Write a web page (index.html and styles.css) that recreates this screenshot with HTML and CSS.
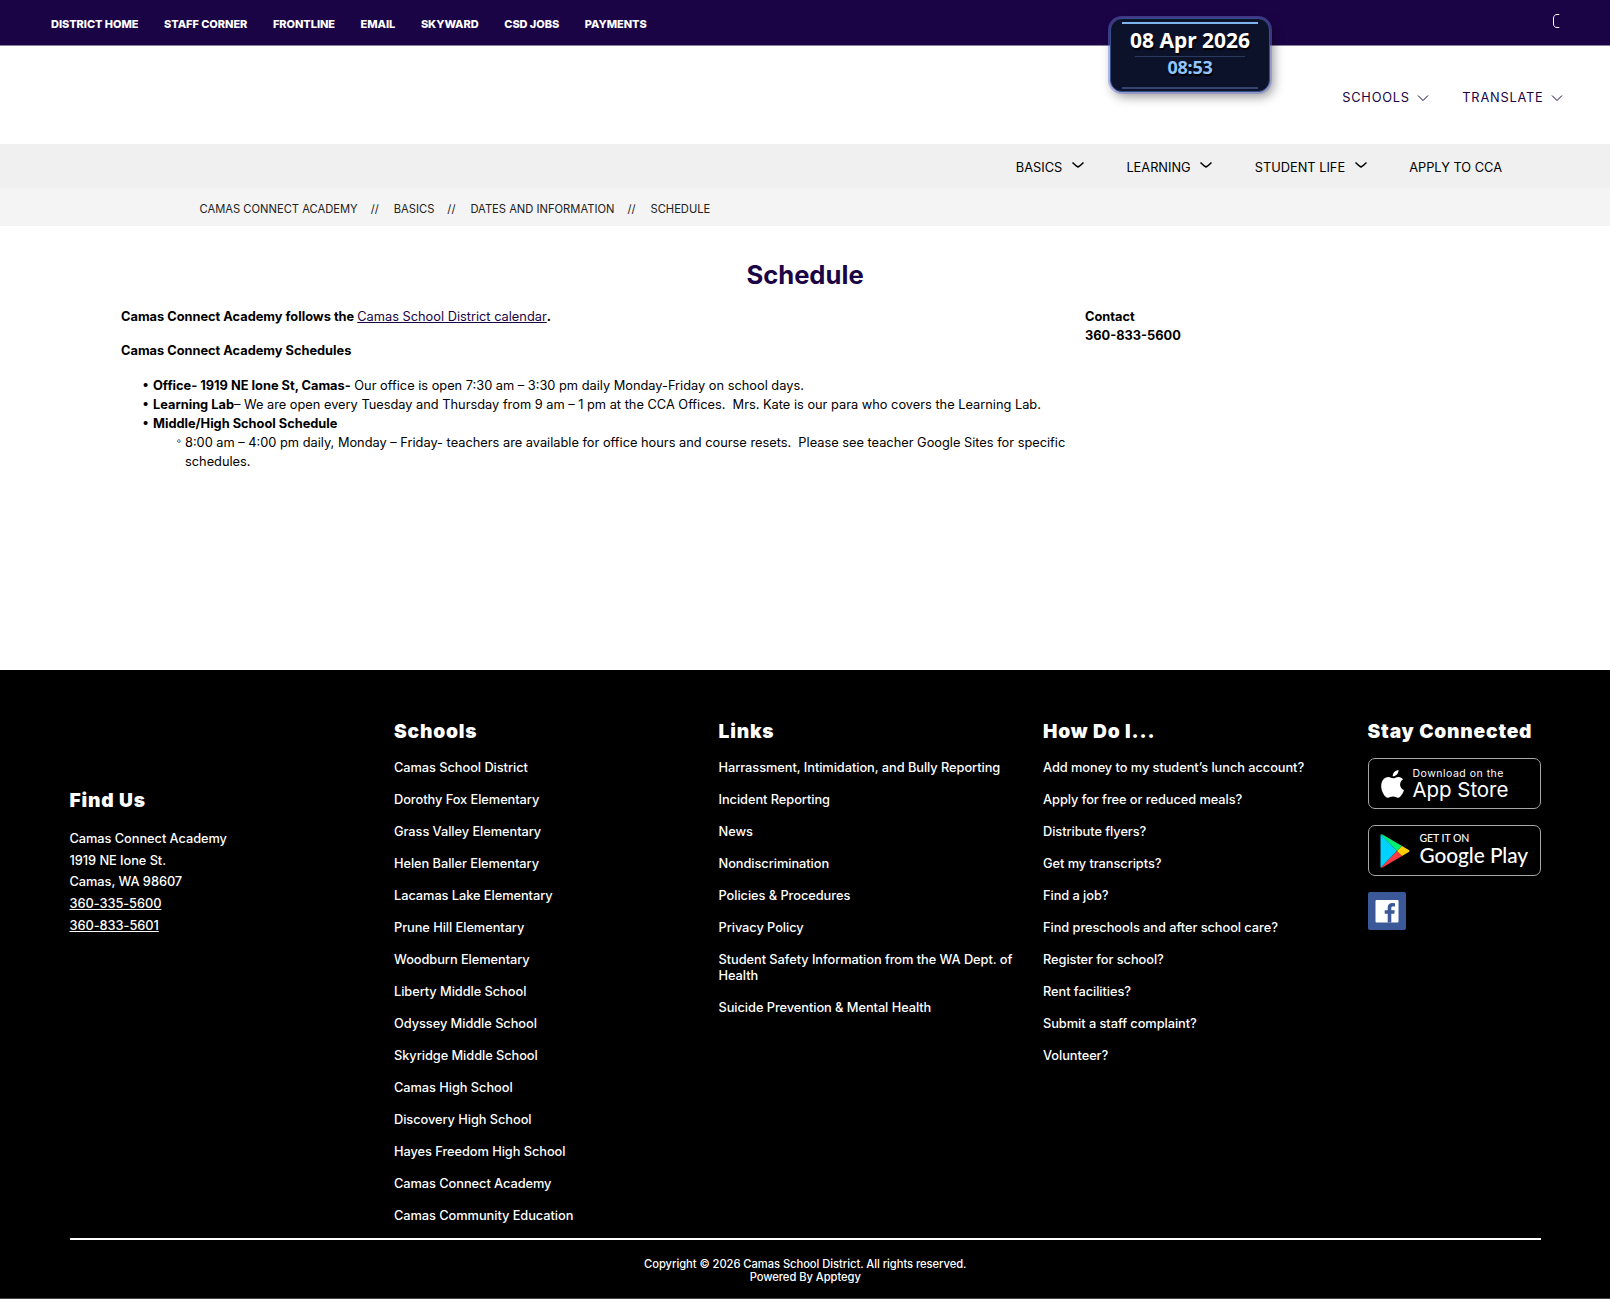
FILE: index.html
```html
<!DOCTYPE html>
<html lang="en">
<head>
    <meta charset="UTF-8">
    <meta name="viewport" content="width=device-width, initial-scale=1.0">
    <title>Schedule | Camas Connect Academy</title>
    <link rel="stylesheet" href="styles.css">
</head>
<body>
    <header>
        <div class="topbar">
            <nav class="quick-links">
                <a href="#">District Home</a>
                <a href="#">Staff Corner</a>
                <a href="#">Frontline</a>
                <a href="#">Email</a>
                <a href="#">Skyward</a>
                <a href="#">CSD Jobs</a>
                <a href="#">Payments</a>
            </nav>
            <svg class="search" width="8" height="16" viewBox="0 0 8 16" fill="none" stroke="#fff" stroke-width="1">
                <path d="M7 2V1.500H5C3 1.500 1.500 3 1.500 5v6c0 2 1.500 3.500 3.500 3.500h2V14"/>
            </svg>
            <div class="clock">
                <div class="clock-date">08 Apr 2026</div>
                <div class="clock-time">08:53</div>
            </div>
        </div>
        <div class="masthead">
            <a href="#">Schools <svg width="12" height="8" viewBox="0 0 12 8"><path d="M1 1.500l5 5 5-5"/></svg></a>
            <a href="#">Translate <svg width="12" height="8" viewBox="0 0 12 8"><path d="M1 1.500l5 5 5-5"/></svg></a>
        </div>
        <nav class="main-nav">
            <a href="#">Basics <svg width="14" height="8" viewBox="0 0 14 8"><path d="M1.500 1.500Q5 5 7 6 9 5 12.500 1.500"/></svg></a>
            <a href="#">Learning <svg width="14" height="8" viewBox="0 0 14 8"><path d="M1.500 1.500Q5 5 7 6 9 5 12.500 1.500"/></svg></a>
            <a href="#">Student Life <svg width="14" height="8" viewBox="0 0 14 8"><path d="M1.500 1.500Q5 5 7 6 9 5 12.500 1.500"/></svg></a>
            <a href="#">Apply to CCA</a>
        </nav>
        <div class="breadcrumbs">
            <a href="#">Camas Connect Academy</a><span>//</span>
            <a href="#">Basics</a><span>//</span>
            <a href="#">Dates and Information</a><span>//</span>
            <a href="#">Schedule</a>
        </div>
    </header>

    <main>
        <h1>Schedule</h1>
        <div class="columns">
            <div class="content">
                <p><b>Camas Connect Academy follows the </b><a href="#">Camas School District calendar</a><b>.</b></p>
                <p><b>Camas Connect Academy Schedules</b></p>
                <ul>
                    <li><b>Office- 1919 NE Ione St, Camas-</b> Our office is open 7:30 am – 3:30 pm daily Monday-Friday on school days.</li>
                    <li><b>Learning Lab</b>– We are open every Tuesday and Thursday from 9 am – 1 pm at the CCA Offices.&nbsp; Mrs. Kate is our para who covers the Learning Lab.</li>
                    <li><b>Middle/High School Schedule</b>
                        <ul>
                            <li>8:00 am – 4:00 pm daily, Monday – Friday- teachers are available for office hours and course resets.&nbsp; Please see teacher Google Sites for specific schedules.</li>
                        </ul>
                    </li>
                </ul>
            </div>
            <aside>
                <b>Contact</b><br>
                <b>360-833-5600</b>
            </aside>
        </div>
    </main>

    <footer>
        <div class="footer-grid">
            <div class="find-us">
                <h2>Find Us</h2>
                <address>
                    Camas Connect Academy<br>
                    1919 NE Ione St.<br>
                    Camas, WA 98607<br>
                    <a href="#">360-335-5600</a><br>
                    <a href="#">360-833-5601</a>
                </address>
            </div>
            <div>
                <h2>Schools</h2>
                <ul>
                    <li>Camas School District</li>
                    <li>Dorothy Fox Elementary</li>
                    <li>Grass Valley Elementary</li>
                    <li>Helen Baller Elementary</li>
                    <li>Lacamas Lake Elementary</li>
                    <li>Prune Hill Elementary</li>
                    <li>Woodburn Elementary</li>
                    <li>Liberty Middle School</li>
                    <li>Odyssey Middle School</li>
                    <li>Skyridge Middle School</li>
                    <li>Camas High School</li>
                    <li>Discovery High School</li>
                    <li>Hayes Freedom High School</li>
                    <li>Camas Connect Academy</li>
                    <li>Camas Community Education</li>
                </ul>
            </div>
            <div>
                <h2>Links</h2>
                <ul>
                    <li>Harrassment, Intimidation, and Bully Reporting</li>
                    <li>Incident Reporting</li>
                    <li>News</li>
                    <li>Nondiscrimination</li>
                    <li>Policies &amp; Procedures</li>
                    <li>Privacy Policy</li>
                    <li>Student Safety Information from the WA Dept. of Health</li>
                    <li>Suicide Prevention &amp; Mental Health</li>
                </ul>
            </div>
            <div>
                <h2>How Do I...</h2>
                <ul>
                    <li>Add money to my student’s lunch account?</li>
                    <li>Apply for free or reduced meals?</li>
                    <li>Distribute flyers?</li>
                    <li>Get my transcripts?</li>
                    <li>Find a job?</li>
                    <li>Find preschools and after school care?</li>
                    <li>Register for school?</li>
                    <li>Rent facilities?</li>
                    <li>Submit a staff complaint?</li>
                    <li>Volunteer?</li>
                </ul>
            </div>
            <div>
                <h2>Stay Connected</h2>
                <a class="badge apple" href="#">
                    <svg width="23" height="28" viewBox="0 0 23 28" fill="#fff">
                        <path d="M17.500 0c.2 3.500-2.700 6.400-5.800 6.300C11.400 3.200 14.400.3 17.500 0z"/>
                        <path d="M22 9.500c-4.300 2.600-3.700 8.700 1 10.500-1 3-3.300 7.300-5.700 7.700-2 .2-2.900-1.200-5.300-1.200s-3.400 1.200-5.200 1.200C3.700 27.600.2 21.500.2 16c0-5.500 3.300-9 7-9 2.200 0 3.600 1.300 5 1.300 1.500 0 3.200-1.500 5.600-1.400 1.700.1 3.200 1 4.200 2.600z"/>
                    </svg>
                    <span class="badge-text"><small>Download on the</small>App Store</span>
                </a>
                <a class="badge google" href="#">
                    <svg width="30" height="34" viewBox="0 0 30 34">
                        <path fill="#00d2ff" d="M.5 1.500Q.5.500 1 .5L17 17 1 33.500Q.500 33.500.500 32.500z"/>
                        <path fill="#00f076" d="M1 .5Q1.700.200 2.500.600L22 12 17 17z"/>
                        <path fill="#ff3a44" d="M1 33.500Q1.700 33.800 2.500 33.400L22 22 17 17z"/>
                        <path fill="#ffd000" d="M22 12l6.800 4q1.400 1 0 2L22 22l-5-5z"/>
                    </svg>
                    <span class="badge-text"><small>GET IT ON</small>Google Play</span>
                </a>
                <a class="facebook" href="#">
                    <svg width="38" height="38" viewBox="0 0 38 38">
                        <rect x="7.500" y="8" width="23" height="22.500" rx="1" fill="#fff"/>
                        <path fill="#3b5998" d="M19.700 30.500v-8.700h-3v-3.500h3v-2.600c0-3.100 1.900-4.600 4.500-4.600l2.800.1v3.200h-1.900c-1.500 0-1.800.7-1.800 1.700v2.200h3.500l-.5 3.500h-3v8.700z"/>
                    </svg>
                </a>
            </div>
        </div>
        <div class="copyright">
            Copyright © 2026 Camas School District. All rights reserved.<br>
            Powered By Apptegy
        </div>
    </footer>
</body>
</html>
```
FILE: styles.css
```css
* {
    box-sizing: border-box;
}
body {
    margin: 0;
    font-family: Inter, Arial, sans-serif;
    font-size: 12.8px;
    color: #000;
    background: #fff;
}
a {
    color: inherit;
    text-decoration: none;
}
ul {
    margin: 0;
    padding: 0;
    list-style: none;
}

/* header */
.topbar {
    position: relative;
    display: flex;
    align-items: center;
    justify-content: space-between;
    height: 46px;
    padding: 2px 50px 0 51px;
    background: #1a0446;
    border-bottom: 1px solid #8b80a2;
}
.quick-links {
    display: flex;
    gap: 25.6px;
    color: #fff;
    font-size: 11px;
    font-weight: 800;
    letter-spacing: -0.05px;
    text-transform: uppercase;
}
.search {
    margin-bottom: 5px;
}
.clock {
    position: absolute;
    top: 18px;
    left: 1110px;
    width: 160px;
    height: 74px;
    padding-top: 8px;
    border: 1px solid #33508a;
    border-radius: 12px;
    background: #0d122b;
    box-shadow: 0 0 0 2px rgba(110, 120, 220, 0.45), 3px 4px 12px rgba(0, 0, 0, 0.45);
    font-family: "Noto Sans", "Open Sans", sans-serif;
    font-weight: 700;
    text-align: center;
    text-shadow: 1px 2px 1px #000;
}
.clock::before,
.clock::after {
    content: "";
    position: absolute;
    left: 11px;
    right: 11px;
    height: 2px;
    background: #7db4ee;
}
.clock::before {
    top: 3px;
}
.clock::after {
    bottom: 2px;
    background: #35456e;
}
.clock-date {
    display: flex;
    justify-content: center;
    width: 110px;
    height: 30px;
    margin: 0 auto;
    border-bottom: 1px solid #2b3a5c;
    color: #fff;
    font-size: 21px;
    line-height: 27px;
    white-space: nowrap;
}
.clock-time {
    color: #90c5ff;
    font-size: 18px;
    letter-spacing: -0.2px;
    line-height: 21px;
}
.masthead {
    display: flex;
    justify-content: flex-end;
    align-items: center;
    gap: 33px;
    height: 98px;
    padding: 4px 47px 0 0;
    color: #1a0446;
    letter-spacing: 0.8px;
    text-transform: uppercase;
}
.masthead svg {
    margin-left: 3px;
    fill: none;
    stroke: #1a0446;
}
.main-nav {
    display: flex;
    justify-content: flex-end;
    align-items: center;
    gap: 41.500px;
    height: 44px;
    padding: 3px 108px 0 0;
    background: #f0f0f0;
    text-transform: uppercase;
}
.main-nav svg {
    margin: 0 0 3px 5px;
    fill: none;
    stroke: #000;
    stroke-width: 1.5;
}
.breadcrumbs {
    display: flex;
    align-items: center;
    height: 38px;
    padding: 3px 0 0 199.500px;
    background: #f4f4f4;
    color: #222;
    font-size: 11.2px;
    text-transform: uppercase;
}
.breadcrumbs span {
    margin: 0 15px 0 13px;
}

/* page */
main {
    height: 444px;
    padding: 33px 121px 0;
    line-height: 19px;
}
h1 {
    margin: 0;
    color: #1a0446;
    font-size: 25.6px;
    font-weight: 700;
    line-height: 32px;
    text-align: center;
}
.columns {
    display: grid;
    grid-template-columns: 950px 1fr;
    gap: 14px;
    padding-top: 16px;
}
.content p {
    margin: 0 0 15px;
}
.content p + p {
    margin-bottom: 16px;
}
.content a {
    color: #1a0446;
    text-decoration: underline;
}
.content li {
    position: relative;
    padding-left: 32px;
}
.content li::before {
    content: "•";
    position: absolute;
    left: 21px;
    top: -1px;
}
.content li li::before {
    content: "◦";
    left: 23px;
    top: -2px;
    font-size: 10px;
}
b {
    font-weight: 700;
}

/* footer */
footer {
    height: 629px;
    padding: 49px 69px 0 69.500px;
    background: #000;
    border-bottom: 1px solid #444;
    color: #fff;
    font-weight: 500;
    letter-spacing: -0.05px;
    line-height: 16px;
}
.footer-grid {
    display: grid;
    grid-template-columns: repeat(4, 324.500px) 1fr;
    height: 521px;
    border-bottom: 2px solid #fff;
}
.footer-grid > div {
    padding-right: 24px;
}
.footer-grid > div:last-child {
    padding-right: 0;
}
h2 {
    margin: 0 0 17px;
    font-size: 19.2px;
    font-weight: 900;
    letter-spacing: 0.8px;
    line-height: 24px;
    white-space: nowrap;
}
footer li {
    margin-bottom: 16px;
}
.footer-grid > .find-us {
    padding-top: 69px;
}
.find-us h2 {
    margin-bottom: 16px;
}
address {
    font-style: normal;
    line-height: 21.700px;
}
address a {
    text-decoration: underline;
}
.badge {
    display: flex;
    align-items: center;
    width: 173px;
    height: 51px;
    margin-bottom: 16px;
    border: 1px solid #a6a6a6;
    border-radius: 7px;
    font-weight: 400;
}
.apple {
    margin-top: -2px;
    padding-left: 12px;
    gap: 9px;
}
.google {
    padding-left: 11px;
    gap: 10px;
}
.badge-text {
    font-size: 20.500px;
    line-height: 20px;
    white-space: nowrap;
}
.badge-text small {
    display: block;
    font-size: 10.500px;
    line-height: 13px;
}
.apple small {
    letter-spacing: 0.5px;
}
.google .badge-text {
    margin-top: -4px;
    font-family: Lato, sans-serif;
    font-size: 20.800px;
    font-weight: 500;
}
.facebook {
    display: block;
    width: 38px;
    height: 38px;
    border-radius: 2px;
    background: #3b5998;
}
.copyright {
    padding-top: 18px;
    font-size: 11.2px;
    line-height: 13px;
    text-align: center;
}
```
